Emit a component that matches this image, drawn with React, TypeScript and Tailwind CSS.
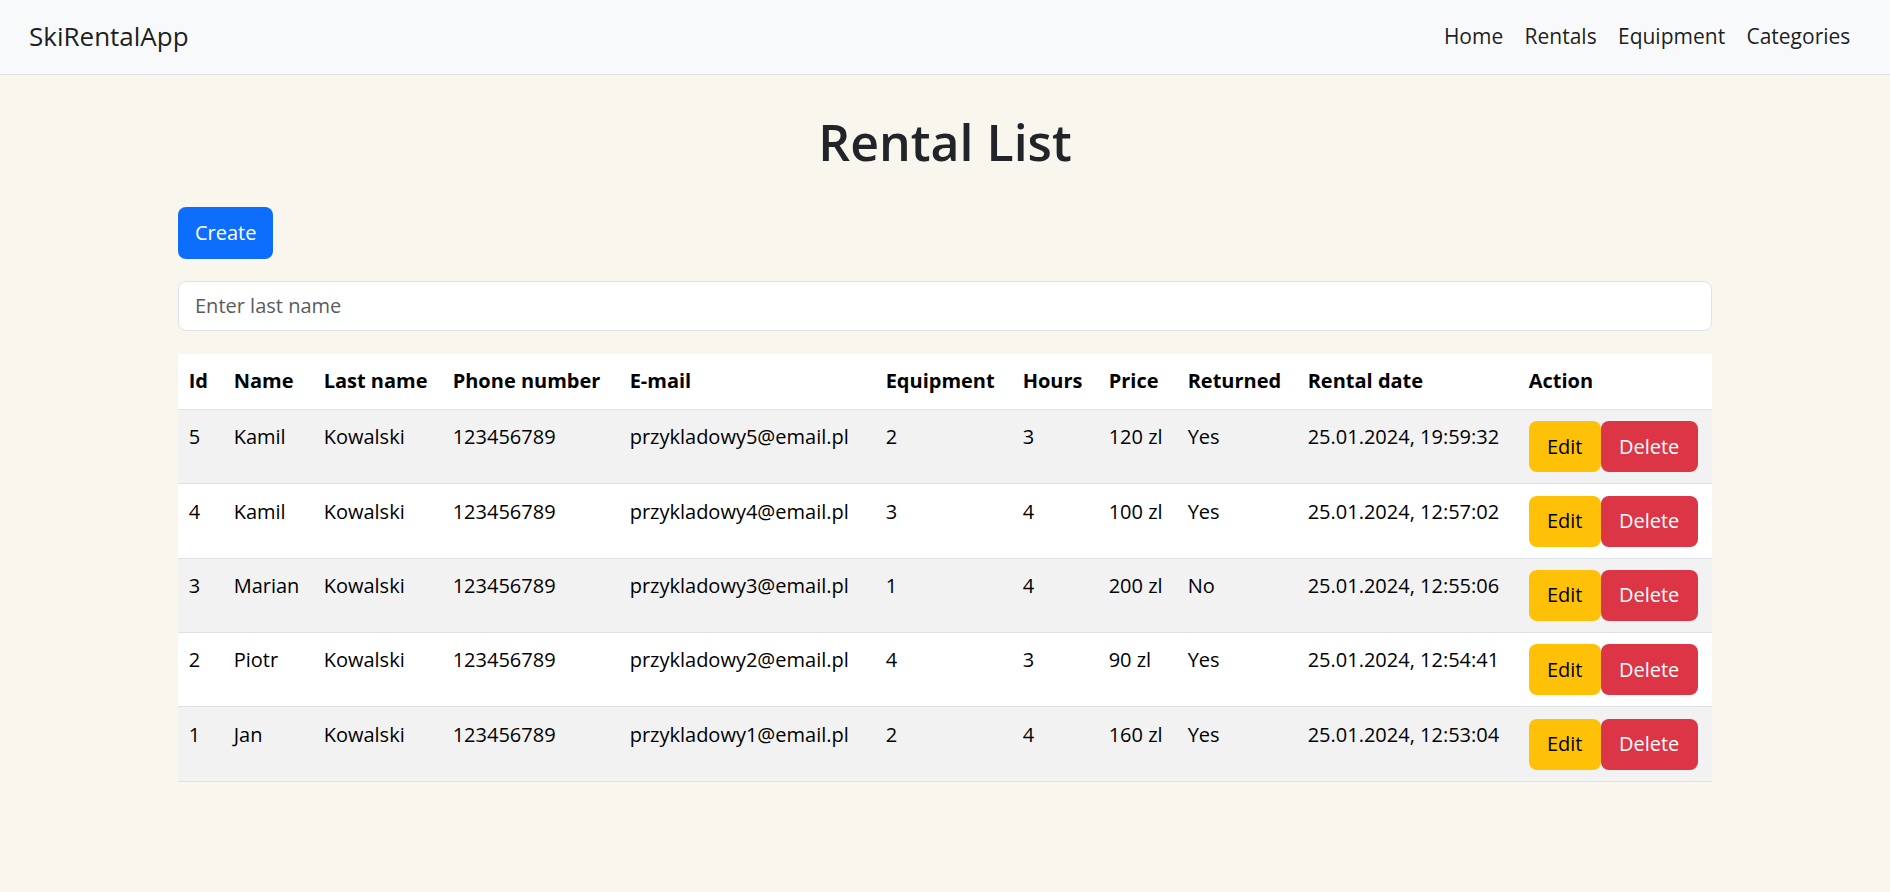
const rentals = [
  { id: 5, name: "Kamil", lastName: "Kowalski", phone: "123456789", email: "przykladowy5@email.pl", equipment: 2, hours: 3, price: "120 zl", returned: "Yes", date: "25.01.2024, 19:59:32" },
  { id: 4, name: "Kamil", lastName: "Kowalski", phone: "123456789", email: "przykladowy4@email.pl", equipment: 3, hours: 4, price: "100 zl", returned: "Yes", date: "25.01.2024, 12:57:02" },
  { id: 3, name: "Marian", lastName: "Kowalski", phone: "123456789", email: "przykladowy3@email.pl", equipment: 1, hours: 4, price: "200 zl", returned: "No", date: "25.01.2024, 12:55:06" },
  { id: 2, name: "Piotr", lastName: "Kowalski", phone: "123456789", email: "przykladowy2@email.pl", equipment: 4, hours: 3, price: "90 zl", returned: "Yes", date: "25.01.2024, 12:54:41" },
  { id: 1, name: "Jan", lastName: "Kowalski", phone: "123456789", email: "przykladowy1@email.pl", equipment: 2, hours: 4, price: "160 zl", returned: "Yes", date: "25.01.2024, 12:53:04" },
];

const columns = [
  { label: "Id", width: "w-[45px]" },
  { label: "Name", width: "w-[90px]" },
  { label: "Last name", width: "w-[129px]" },
  { label: "Phone number", width: "w-[177px]" },
  { label: "E-mail", width: "w-[256px]" },
  { label: "Equipment", width: "w-[137px]" },
  { label: "Hours", width: "w-[86px]" },
  { label: "Price", width: "w-[79px]" },
  { label: "Returned", width: "w-[120px]" },
  { label: "Rental date", width: "w-[221px]" },
  { label: "Action", width: "w-[194px]" },
];

const head = "px-[10.67px] py-[11.67px] align-top leading-[32px]";
const cell = "px-[10.67px] py-[11.2px] align-top leading-[32px]";

export default function App() {
  return (
    <div className="min-h-screen bg-[#f9f7ed] font-['Open_Sans',sans-serif] text-black">
      {/* Navbar */}
      <nav className="h-[74.67px] flex items-center justify-between pl-[29px] pr-[29px] bg-[#f8f9fa] border-b border-[#dee2e6]">
        <a className="text-[26px] text-black/90">SkiRentalApp</a>
        <ul className="flex items-center text-[21px] text-black/90">
          <li className="px-[10.67px]">Home</li>
          <li className="px-[10.67px]">Rentals</li>
          <li className="px-[10.67px]">Equipment</li>
          <li className="px-[10.67px]">Categories</li>
        </ul>
      </nav>

      <main className="w-[1534px] mx-auto">
        <h1 className="mt-[35px] text-center text-[50px] leading-[64px] font-semibold text-[#212529]">
          Rental List
        </h1>

        <button className="mt-[33px] h-[52px] px-[17px] rounded-[8px] bg-[#0d6efd] text-white text-[20px]">
          Create
        </button>

        <input
          className="mt-[22px] block w-full h-[50px] px-[16px] rounded-[8px] border border-[#dee2e6] bg-white text-[20px] placeholder:text-[#595c5f] outline-none"
          placeholder="Enter last name"
        />

        <table className="mt-[23px] w-full table-fixed border-collapse bg-white text-[20px]">
          <thead>
            <tr className="border-b border-[#dee2e6]">
              {columns.map((c) => (
                <th key={c.label} className={`${c.width} ${head} text-left font-bold`}>
                  {c.label}
                </th>
              ))}
            </tr>
          </thead>
          <tbody>
            {rentals.map((r, i) => (
              <tr key={r.id} className={`border-b border-[#dee2e6] ${i % 2 === 0 ? "bg-[#f2f2f2]" : "bg-white"}`}>
                <td className={cell}>{r.id}</td>
                <td className={cell}>{r.name}</td>
                <td className={cell}>{r.lastName}</td>
                <td className={cell}>{r.phone}</td>
                <td className={`${cell} whitespace-nowrap`}>{r.email}</td>
                <td className={cell}>{r.equipment}</td>
                <td className={cell}>{r.hours}</td>
                <td className={cell}>{r.price}</td>
                <td className={cell}>{r.returned}</td>
                <td className={`${cell} whitespace-nowrap`}>{r.date}</td>
                <td className={cell}>
                  <div className="flex">
                    <button className="h-[51px] w-[72px] rounded-[8px] bg-[#ffc107] text-black">Edit</button>
                    <button className="h-[51px] w-[97px] rounded-[8px] bg-[#dc3545] text-white">Delete</button>
                  </div>
                </td>
              </tr>
            ))}
          </tbody>
        </table>
      </main>
    </div>
  );
}
